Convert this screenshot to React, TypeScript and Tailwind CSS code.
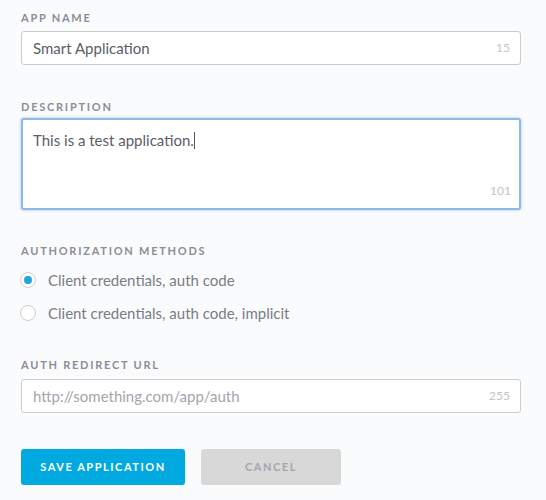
import React from "react";

const labelCls =
  "block text-[11px] font-bold uppercase tracking-[0.16em] text-[#8b8e96] leading-none";

export default function App() {
  return (
    <div
      className="w-[546px] h-[500px] bg-[#fafbfd] px-[21px] pt-[12px]"
      style={{ fontFamily: "Lato, 'Open Sans', sans-serif" }}
    >
      <div className="w-[500px]">
        <label className={labelCls}>App Name</label>
        <div className="mt-[8px] h-[34px] rounded-[3px] border border-[#cccccc] bg-white flex items-center justify-between pl-[11px] pr-[10px]">
          <span className="text-[15px] text-[#5b5d68]">Smart Application</span>
          <span className="text-[12px] text-[#c4c4c4]">15</span>
        </div>

        <label className={`${labelCls} mt-[36px]`}>Description</label>
        <div className="mt-[6px] h-[92px] rounded-[3px] border-2 border-[#8dbbe6] bg-white shadow-[0_0_3px_rgba(120,170,230,0.7)] relative pl-[10px] pt-[8px]">
          <span className="text-[15px] text-[#5b5d68]">
            This is a test application.
            <span className="inline-block w-px h-[17px] bg-[#555] align-[-3px]" />
          </span>
          <span className="absolute right-[8px] bottom-[8px] text-[12px] text-[#c4c4c4]">
            101
          </span>
        </div>

        <label className={`${labelCls} mt-[35px]`}>Authorization Methods</label>
        <div className="mt-[14px] flex items-center gap-[12px] h-[20px]">
          <span className="w-[16px] h-[16px] rounded-full border border-[#cfcfcf] bg-white flex items-center justify-center ml-[-1px]">
            <span className="w-[8px] h-[8px] rounded-full bg-[#1ea7e0]" />
          </span>
          <span className="text-[15px] text-[#7a7c85]">Client credentials, auth code</span>
        </div>
        <div className="mt-[13px] flex items-center gap-[12px] h-[20px]">
          <span className="w-[16px] h-[16px] rounded-full border border-[#cfcfcf] bg-white ml-[-1px]" />
          <span className="text-[15px] text-[#7a7c85]">
            Client credentials, auth code, implicit
          </span>
        </div>

        <label className={`${labelCls} mt-[36px]`}>Auth Redirect URL</label>
        <div className="mt-[9px] h-[34px] rounded-[3px] border border-[#cccccc] bg-white flex items-center justify-between pl-[11px] pr-[10px]">
          <span className="text-[15px] text-[#a3a5ac]">http://something.com/app/auth</span>
          <span className="text-[12px] text-[#c4c4c4]">255</span>
        </div>

        <div className="mt-[36px] flex gap-[16px]">
          <button className="w-[164px] h-[36px] rounded-[3px] bg-[#00a9df] text-white text-[11px] font-bold uppercase tracking-[0.14em]">
            Save Application
          </button>
          <button className="w-[140px] h-[36px] rounded-[3px] bg-[#d8d8d8] text-[#a4a6ac] text-[11px] font-bold uppercase tracking-[0.14em]">
            Cancel
          </button>
        </div>
      </div>
    </div>
  );
}
